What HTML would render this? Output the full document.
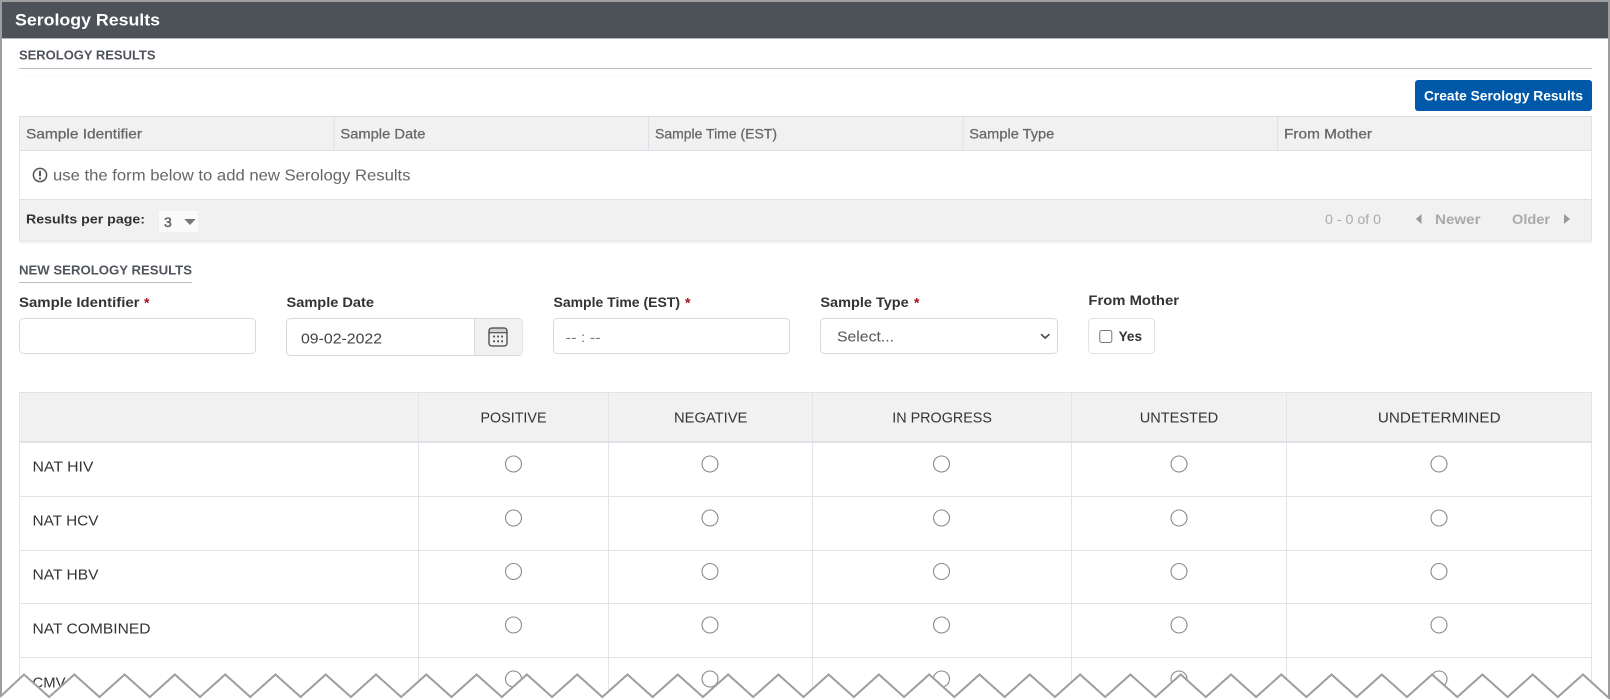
<!DOCTYPE html>
<html lang="en">
<head>
<meta charset="utf-8">
<title>Serology Results</title>
<style>
html,body{margin:0;padding:0;background:#fff;width:1610px;height:700px;overflow:hidden}
svg{display:block}
text{font-family:"Liberation Sans",Arial,sans-serif;white-space:pre}
.b{font-weight:700}
.h{font-size:14px;fill:#666;stroke:#666;stroke-width:.25}
.l{font-size:13.5px;fill:#333;font-weight:700}
.s{fill:#a3101a;font-size:14px;font-weight:700}
.t{font-size:15px;fill:#333}
.r{fill:#fff;stroke:#8a8a8a;stroke-width:1.1}
</style>
</head>
<body>
<svg width="1610" height="700" viewBox="0 0 1610 700" xmlns="http://www.w3.org/2000/svg">
<rect width="1610" height="700" fill="#fff"/>

<!-- title bar -->
<rect x="2" y="2" width="1606" height="36" fill="#4d5259"/>
<rect x="2" y="38" width="1606" height="1" fill="#b5b8bc"/>
<text x="15" y="25.5" font-size="17" class="b" fill="#fff" textLength="145" lengthAdjust="spacingAndGlyphs">Serology Results</text>

<!-- section heading -->
<text x="19" y="59.5" font-size="12.5" class="b" fill="#50545c" textLength="136.5" lengthAdjust="spacingAndGlyphs">SEROLOGY RESULTS</text>
<rect x="19" y="68" width="1573" height="1" fill="#b8bec8"/>

<!-- results panel -->
<rect x="19" y="75" width="1573" height="1" fill="#f9f9f9"/>
<rect x="1415" y="80" width="177" height="31" rx="3" fill="#0059a8"/>
<text x="1424" y="100.5" font-size="14" class="b" fill="#fff" textLength="159" lengthAdjust="spacingAndGlyphs">Create Serology Results</text>

<rect x="19.5" y="116.5" width="1572" height="34" fill="#f1f1f1" stroke="#dfe1e8"/>
<g fill="#dfe1e8">
<rect x="333.5" y="117" width="1" height="33"/>
<rect x="648" y="117" width="1" height="33"/>
<rect x="962.5" y="117" width="1" height="33"/>
<rect x="1277" y="117" width="1" height="33"/>
</g>
<text x="26" y="138.5" class="h" textLength="116" lengthAdjust="spacingAndGlyphs">Sample Identifier</text>
<text x="340.4" y="138.5" class="h" textLength="85" lengthAdjust="spacingAndGlyphs">Sample Date</text>
<text x="655" y="138.5" class="h" textLength="122" lengthAdjust="spacingAndGlyphs">Sample Time (EST)</text>
<text x="969.3" y="138.5" class="h" textLength="85" lengthAdjust="spacingAndGlyphs">Sample Type</text>
<text x="1284" y="138.5" class="h" textLength="88" lengthAdjust="spacingAndGlyphs">From Mother</text>

<rect x="19" y="151" width="1" height="48" fill="#e4e6ec"/>
<rect x="1591" y="151" width="1" height="48" fill="#e4e6ec"/>
<circle cx="40" cy="175" r="6.6" fill="none" stroke="#555" stroke-width="1.5"/>
<rect x="39" y="170.8" width="2" height="5.4" fill="#555"/>
<rect x="39" y="177.4" width="2" height="2" fill="#555"/>
<text x="53" y="180.5" font-size="16" fill="#666" textLength="357.5" lengthAdjust="spacingAndGlyphs">use the form below to add new Serology Results</text>

<rect x="19.5" y="199.5" width="1572" height="41.5" fill="#f1f1f1" stroke="#dfe1e8"/>
<rect x="20" y="242" width="1571" height="1" fill="#f2f2f4"/>
<rect x="20" y="243" width="1571" height="1" fill="#f9f9fa"/>
<text x="26" y="223.5" font-size="13" class="b" fill="#333" textLength="119" lengthAdjust="spacingAndGlyphs">Results per page:</text>
<rect x="158.5" y="210.5" width="40" height="22" rx="1" fill="#fafafa" stroke="#f0f0f0"/>
<text x="164" y="227" font-size="14" fill="#555" stroke="#555" stroke-width=".3">3</text>
<polygon points="184.3,219 195.7,219 190,225" fill="#777"/>
<text x="1325" y="224" font-size="14" fill="#aaa" textLength="56" lengthAdjust="spacingAndGlyphs">0 - 0 of 0</text>
<polygon points="1421.5,214 1421.5,224 1416,219" fill="#999"/>
<text x="1435" y="224" font-size="13.5" class="b" fill="#aaa" textLength="45.5" lengthAdjust="spacingAndGlyphs">Newer</text>
<text x="1512" y="224" font-size="13.5" class="b" fill="#aaa" textLength="38" lengthAdjust="spacingAndGlyphs">Older</text>
<polygon points="1564,214 1564,224 1570,219" fill="#999"/>

<!-- new form heading -->
<text x="19" y="274.5" font-size="12.5" class="b" fill="#50545c" textLength="173" lengthAdjust="spacingAndGlyphs">NEW SEROLOGY RESULTS</text>
<rect x="19" y="282" width="173" height="1" fill="#b8bec8"/>

<text x="19" y="306.8" class="l" textLength="120.5" lengthAdjust="spacingAndGlyphs">Sample Identifier</text>
<text x="144" y="307.5" class="s">*</text>
<text x="286.5" y="306.8" class="l" textLength="87.5" lengthAdjust="spacingAndGlyphs">Sample Date</text>
<text x="553.5" y="306.8" class="l" textLength="126.5" lengthAdjust="spacingAndGlyphs">Sample Time (EST)</text>
<text x="685" y="307.5" class="s">*</text>
<text x="820.4" y="306.8" class="l" textLength="88.3" lengthAdjust="spacingAndGlyphs">Sample Type</text>
<text x="914" y="307.5" class="s">*</text>
<text x="1088.4" y="304.8" class="l" textLength="90.6" lengthAdjust="spacingAndGlyphs">From Mother</text>

<!-- inputs -->
<rect x="19.5" y="318.5" width="236" height="35" rx="4" fill="#fff" stroke="#d6d9e0"/>
<rect x="286.5" y="318.5" width="236" height="37" rx="4" fill="#fff" stroke="#d6d9e0"/>
<path d="M474.5 319H519a3.5 3.5 0 0 1 3.5 3.5V351.5a3.5 3.5 0 0 1 -3.5 3.5H474.5Z" fill="#f1f1f1"/>
<rect x="474" y="319" width="1" height="36" fill="#d6d9e0"/>
<text x="301" y="343.5" font-size="15" fill="#444" textLength="81" lengthAdjust="spacingAndGlyphs">09-02-2022</text>
<g>
<rect x="489" y="328" width="18" height="18" rx="2.8" fill="none" stroke="#444" stroke-width="1.3"/>
<rect x="489" y="328" width="18" height="4.5" rx="2" fill="#444" opacity=".18"/>
<rect x="489" y="332.2" width="18" height="1.1" fill="#444"/>
<g fill="#444">
<rect x="493.2" y="335.6" width="1.8" height="1.8"/><rect x="497.2" y="335.6" width="1.8" height="1.8"/><rect x="501.2" y="335.6" width="1.8" height="1.8"/>
<rect x="493.2" y="340.4" width="1.8" height="1.8"/><rect x="497.2" y="340.4" width="1.8" height="1.8"/><rect x="501.2" y="340.4" width="1.8" height="1.8"/>
</g>
</g>
<rect x="553.5" y="318.5" width="236" height="35" rx="4" fill="#fff" stroke="#d6d9e0"/>
<text x="565.7" y="342" font-size="13.5" fill="#777" textLength="35" lengthAdjust="spacingAndGlyphs">-- : --</text>
<rect x="820.5" y="318.5" width="237" height="35" rx="4" fill="#fff" stroke="#d6d9e0"/>
<text x="837" y="341.5" font-size="15" fill="#555" textLength="57" lengthAdjust="spacingAndGlyphs">Select...</text>
<path d="M1041 334.2l4.2 3.8 4.2-3.8" fill="none" stroke="#444" stroke-width="1.6"/>
<rect x="1088.5" y="318.5" width="66" height="35" rx="4" fill="#fff" stroke="#e0e2e8"/>
<rect x="1099.8" y="330.5" width="12" height="12" rx="2" fill="#fff" stroke="#767676"/>
<text x="1118.6" y="341" font-size="14" class="b" fill="#333" textLength="23.4" lengthAdjust="spacingAndGlyphs">Yes</text>

<!-- matrix table -->
<rect x="19.5" y="392.5" width="1572" height="49" fill="#f1f1f1"/>
<rect x="19" y="392" width="1573" height="1" fill="#e0e2e8"/>
<rect x="19" y="441" width="1573" height="2" fill="#dfe2e6"/>
<g fill="#e2e4ea">
<rect x="19" y="392" width="1" height="308"/>
<rect x="418" y="392" width="1" height="308"/>
<rect x="608" y="392" width="1" height="308"/>
<rect x="812" y="392" width="1" height="308"/>
<rect x="1071" y="392" width="1" height="308"/>
<rect x="1286" y="392" width="1" height="308"/>
<rect x="1591" y="392" width="1" height="308"/>
<rect x="19" y="496" width="1573" height="1"/>
<rect x="19" y="550" width="1573" height="1"/>
<rect x="19" y="603" width="1573" height="1"/>
<rect x="19" y="657" width="1573" height="1"/>
</g>
<text x="480.5" y="422.5" class="t" textLength="66" lengthAdjust="spacingAndGlyphs">POSITIVE</text>
<text x="674" y="422.5" class="t" textLength="73.4" lengthAdjust="spacingAndGlyphs">NEGATIVE</text>
<text x="892.3" y="422.5" class="t" textLength="99.6" lengthAdjust="spacingAndGlyphs">IN PROGRESS</text>
<text x="1139.7" y="422.5" class="t" textLength="78.5" lengthAdjust="spacingAndGlyphs">UNTESTED</text>
<text x="1377.9" y="422.5" class="t" textLength="122.7" lengthAdjust="spacingAndGlyphs">UNDETERMINED</text>

<text x="32.5" y="471.5" class="t" textLength="61" lengthAdjust="spacingAndGlyphs">NAT HIV</text>
<text x="32.5" y="525.5" class="t" textLength="66" lengthAdjust="spacingAndGlyphs">NAT HCV</text>
<text x="32.5" y="579.5" class="t" textLength="66" lengthAdjust="spacingAndGlyphs">NAT HBV</text>
<text x="32.5" y="633.5" class="t" textLength="118" lengthAdjust="spacingAndGlyphs">NAT COMBINED</text>
<text x="32.5" y="687.5" class="t" textLength="33" lengthAdjust="spacingAndGlyphs">CMV</text>

<g class="r">
<circle cx="513.5" cy="464" r="8"/><circle cx="710" cy="464" r="8"/><circle cx="941.5" cy="464" r="8"/><circle cx="1179" cy="464" r="8"/><circle cx="1439" cy="464" r="8"/>
<circle cx="513.5" cy="518" r="8"/><circle cx="710" cy="518" r="8"/><circle cx="941.5" cy="518" r="8"/><circle cx="1179" cy="518" r="8"/><circle cx="1439" cy="518" r="8"/>
<circle cx="513.5" cy="571.5" r="8"/><circle cx="710" cy="571.5" r="8"/><circle cx="941.5" cy="571.5" r="8"/><circle cx="1179" cy="571.5" r="8"/><circle cx="1439" cy="571.5" r="8"/>
<circle cx="513.5" cy="625" r="8"/><circle cx="710" cy="625" r="8"/><circle cx="941.5" cy="625" r="8"/><circle cx="1179" cy="625" r="8"/><circle cx="1439" cy="625" r="8"/>
<circle cx="513.5" cy="679" r="8"/><circle cx="710" cy="679" r="8"/><circle cx="941.5" cy="679" r="8"/><circle cx="1179" cy="679" r="8"/><circle cx="1439" cy="679" r="8"/>
</g>

<!-- torn edge -->
<polygon fill="#fff" points="0,697 24,674.5 49.2,697 74.3,674.5 99.5,697 124.6,674.5 149.8,697 174.9,674.5 200,697 225.2,674.5 250.3,697 275.5,674.5 300.6,697 325.7,674.5 350.9,697 376,674.5 401.2,697 426.3,674.5 451.5,697 476.6,674.5 501.8,697 526.9,674.5 552,697 577.2,674.5 602.3,697 627.5,674.5 652.6,697 677.8,674.5 702.9,697 728.1,674.5 753.2,697 778.4,674.5 803.5,697 828.6,674.5 853.8,697 878.9,674.5 904,697 929.2,674.5 954.3,697 979.5,674.5 1004.6,697 1029.8,674.5 1054.9,697 1080.1,674.5 1105.2,697 1130.4,674.5 1155.5,697 1180.7,674.5 1205.8,697 1231,674.5 1256.1,697 1281.3,674.5 1306.4,697 1331.5,674.5 1356.7,697 1381.8,674.5 1407,697 1432.1,674.5 1457.3,697 1482.4,674.5 1507.6,697 1532.7,674.5 1557.8,697 1583,674.5 1610,699 1610,700 0,700"/>
<polyline fill="none" stroke="#9e9e9e" stroke-width="2" points="0,697 24,674.5 49.2,697 74.3,674.5 99.5,697 124.6,674.5 149.8,697 174.9,674.5 200,697 225.2,674.5 250.3,697 275.5,674.5 300.6,697 325.7,674.5 350.9,697 376,674.5 401.2,697 426.3,674.5 451.5,697 476.6,674.5 501.8,697 526.9,674.5 552,697 577.2,674.5 602.3,697 627.5,674.5 652.6,697 677.8,674.5 702.9,697 728.1,674.5 753.2,697 778.4,674.5 803.5,697 828.6,674.5 853.8,697 878.9,674.5 904,697 929.2,674.5 954.3,697 979.5,674.5 1004.6,697 1029.8,674.5 1054.9,697 1080.1,674.5 1105.2,697 1130.4,674.5 1155.5,697 1180.7,674.5 1205.8,697 1231,674.5 1256.1,697 1281.3,674.5 1306.4,697 1331.5,674.5 1356.7,697 1381.8,674.5 1407,697 1432.1,674.5 1457.3,697 1482.4,674.5 1507.6,697 1532.7,674.5 1557.8,697 1583,674.5 1610,699"/>

<!-- outer frame -->
<rect x="0" y="0" width="1610" height="2" fill="#9e9e9e"/>
<rect x="0" y="0" width="2" height="696" fill="#9e9e9e"/>
<rect x="1608" y="0" width="2" height="698" fill="#9e9e9e"/>
</svg>
</body>
</html>
